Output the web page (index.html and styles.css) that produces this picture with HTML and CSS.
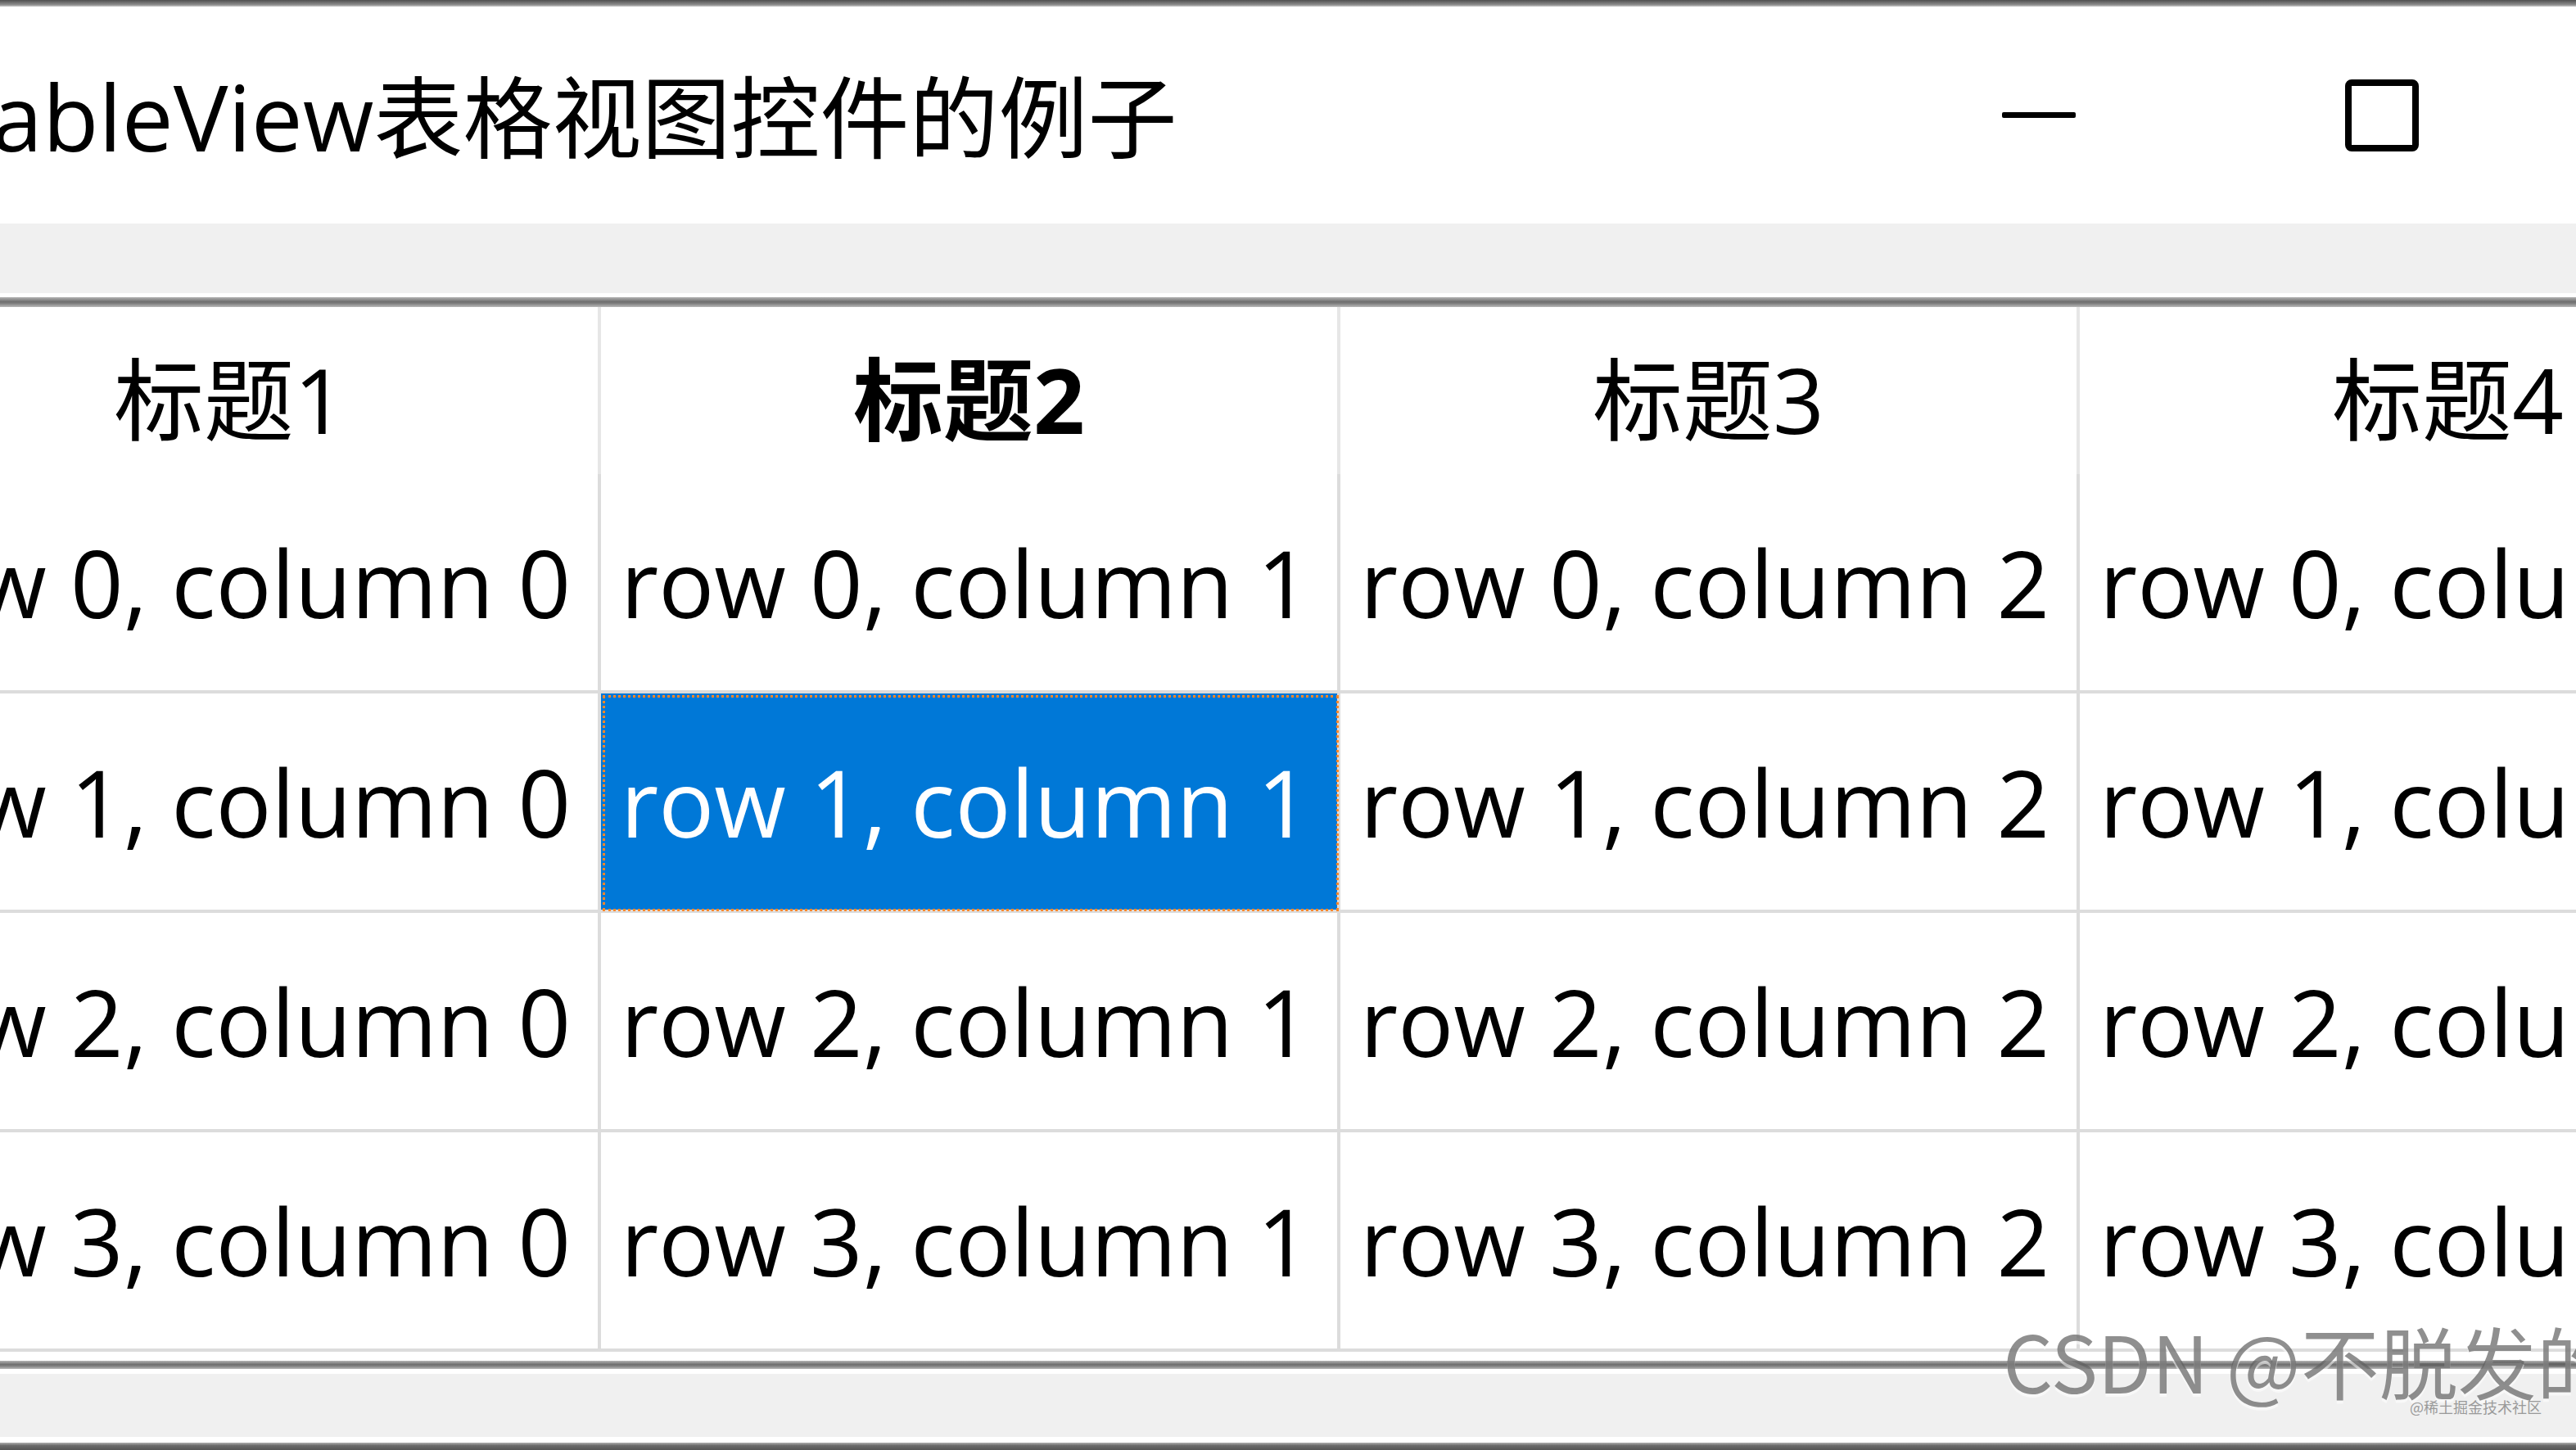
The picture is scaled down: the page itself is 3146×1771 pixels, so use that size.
FILE: index.html
```html
<!DOCTYPE html>
<html lang="zh-CN">
<head>
    <meta charset="UTF-8">
    <title>QTableView表格视图控件的例子</title>
    <link rel="stylesheet" href="styles.css">
</head>
<body>
    <div class="window">
        <div class="frame-top"></div>
        <div class="titlebar">
            <div class="title"><span class="latin">QTableView</span>表格视图控件的例子</div>
            <div class="controls">
                <div class="ctl"><svg width="90" height="10" viewBox="0 0 90 10"><rect x="0" y="1" width="90" height="7" rx="2" fill="#000"/></svg></div>
                <div class="ctl"><svg width="92" height="90" viewBox="0 0 92 90"><rect x="5" y="5" width="82" height="80" rx="4" fill="none" stroke="#000" stroke-width="8"/></svg></div>
                <div class="ctl"><svg width="90" height="90" viewBox="0 0 90 90"><path d="M4 4 L86 86 M86 4 L4 86" stroke="#000" stroke-width="7"/></svg></div>
            </div>
        </div>
        <div class="band"></div>
        <div class="gap"></div>
        <div class="rule"></div>

        <div class="table">
            <div class="row head">
                <div class="hcell">标题1</div>
                <div class="hcell bold">标题2</div>
                <div class="hcell">标题3</div>
                <div class="hcell">标题4</div>
            </div>
            <div class="row">
                <div class="cell">row 0, column 0</div>
                <div class="cell">row 0, column 1</div>
                <div class="cell">row 0, column 2</div>
                <div class="cell">row 0, column 3</div>
            </div>
            <div class="row">
                <div class="cell">row 1, column 0</div>
                <div class="cell sel">row 1, column 1</div>
                <div class="cell">row 1, column 2</div>
                <div class="cell">row 1, column 3</div>
            </div>
            <div class="row">
                <div class="cell">row 2, column 0</div>
                <div class="cell">row 2, column 1</div>
                <div class="cell">row 2, column 2</div>
                <div class="cell">row 2, column 3</div>
            </div>
            <div class="row">
                <div class="cell">row 3, column 0</div>
                <div class="cell">row 3, column 1</div>
                <div class="cell">row 3, column 2</div>
                <div class="cell">row 3, column 3</div>
            </div>
        </div>

        <div class="gap-bottom"></div>
        <div class="rule"></div>
        <div class="gap-small"></div>
        <div class="status"></div>
        <div class="gap-small2"></div>
        <div class="frame-bottom"></div>
    </div>

    <div class="watermark">CSDN @不脱发的程序猿</div>
    <div class="juejin">@稀土掘金技术社区</div>
</body>
</html>
```

FILE: styles.css
```css
html, body { margin: 0; padding: 0; }
body { width: 3146px; height: 1771px; overflow: hidden; position: relative; background: #fff; color: #000; font-family: "Open Sans", "Noto Sans CJK SC", sans-serif; }

.window { width: 3706px; margin-left: -169px; }
.frame-top { height: 8px; background: linear-gradient(#4f4f4f, #8a8a8a 70%, #c8c8c8); }
.frame-bottom { height: 9px; background: linear-gradient(#b0b0b0, #6a6a6a 40%, #555); }

.titlebar { height: 265px; display: flex; align-items: center; background: #fff; }
.title { padding-left: 10px; font-family: "Noto Sans CJK SC", sans-serif; font-size: 109px; line-height: 1; white-space: nowrap; }
.title .latin { font-family: "Open Sans", sans-serif; font-size: 112px; }
.controls { margin-left: auto; display: flex; }
.ctl { width: 419px; height: 265px; display: flex; align-items: center; justify-content: center; }

.band { height: 85px; background: #f0f0f0; }
.gap { height: 5px; background: #fff; }
.rule { height: 10px; background: linear-gradient(#b4b4b4, #707070 45%, #7a7a7a 60%, #b8b8b8); }
.band + .gap + .rule { height: 12px; }

.table { width: 3612px; }
.row { display: flex; height: 268px; }
.row.head { height: 204px; }
.hcell { box-sizing: border-box; width: 903px; border-right: 4px solid #e6e6e6; display: flex; align-items: center; justify-content: center; padding-top: 10px; font-size: 110px; }
.hcell.bold { font-weight: bold; }
.cell { box-sizing: border-box; width: 903px; border-right: 4px solid #dcdcdc; border-bottom: 4px solid #dcdcdc; display: flex; align-items: center; padding-left: 24px; font-size: 113px; white-space: nowrap; overflow: hidden; }
.cell.sel { background: #0078d7; color: #fff; outline: 3px dotted #ff8728; outline-offset: -5px; }

.gap-bottom { height: 11px; }
.gap-small { height: 6px; }
.status { height: 77px; background: #f0f0f0; }
.gap-small2 { height: 7px; }

.watermark { position: absolute; left: 2446px; top: 1606px; font-family: "Noto Sans CJK SC", sans-serif; font-size: 96px; line-height: 110px; color: rgba(95, 95, 95, 0.7); white-space: nowrap; text-shadow: 0 4px 0 rgba(255, 255, 255, 0.5); }
.juejin { position: absolute; left: 2943px; top: 1706px; font-family: "Noto Sans CJK SC", sans-serif; font-size: 18px; line-height: 24px; color: #9a9a9a; white-space: nowrap; }
```
